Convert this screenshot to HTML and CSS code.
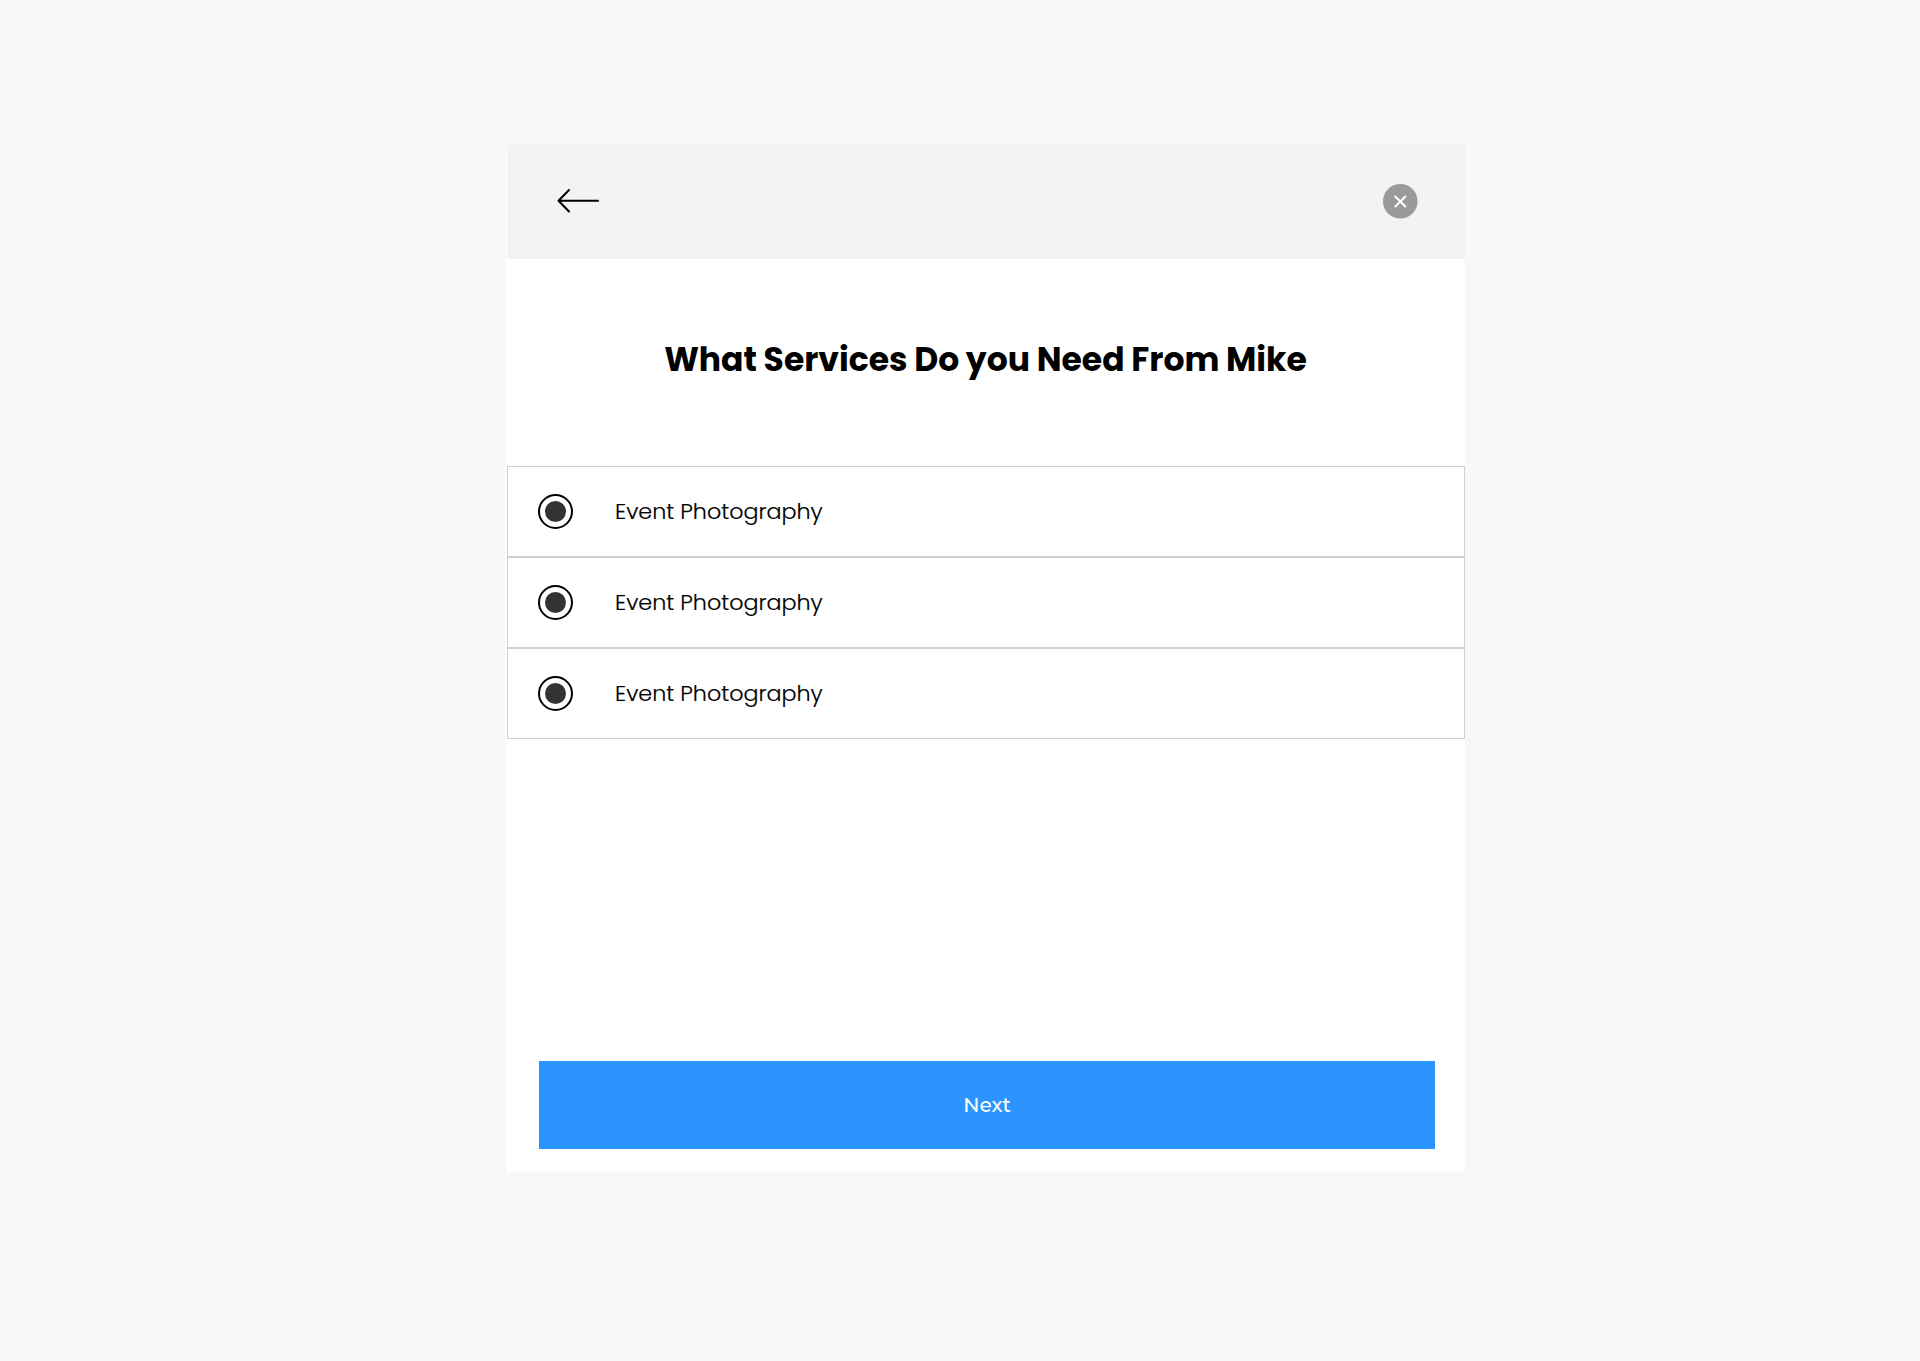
FILE: index.html
```html
<!DOCTYPE html>
<html lang="en">
<head>
<meta charset="utf-8">
<title>Select services</title>
<link rel="stylesheet" href="styles.css">
</head>
<body>
<main class="dialog">
  <header class="bar">
    <button class="icon-button" aria-label="Back">
      <svg width="44" height="28" viewBox="0 0 44 28" fill="none" stroke="#000" stroke-width="2" stroke-linecap="round" stroke-linejoin="round"><path d="M42 12.7H3M13 2 2.5 12.7 13 23.5"/></svg>
    </button>
    <button class="icon-button" aria-label="Close">
      <svg width="35" height="35" viewBox="0 0 35 35"><circle cx="17.3" cy="17.3" r="17.3" fill="#9a9a9a"/><path d="m12.3 12.5 10 10m0-10-10 10" fill="none" stroke="#fff" stroke-width="2" stroke-linecap="round"/></svg>
    </button>
  </header>
  <section class="content">
    <h1 class="title">What Services Do you Need From Mike</h1>
    <ul class="options">
      <li class="option"><span class="radio"></span><span class="label">Event Photography</span></li>
      <li class="option"><span class="radio"></span><span class="label">Event Photography</span></li>
      <li class="option"><span class="radio"></span><span class="label">Event Photography</span></li>
    </ul>
    <button class="next">Next</button>
  </section>
</main>
</body>
</html>
```
FILE: styles.css
```css
* { box-sizing: border-box; }
body {
  margin: 0;
  min-height: 1361px;
  padding: 143px 455px 0 506px;
  background: #f8f8f8;
  color: #000;
  font-family: Poppins, Inter, sans-serif;
}
button { border: 0; padding: 0; font: inherit; }
.dialog {
  height: 1029px;
  display: flex;
  flex-direction: column;
  background: linear-gradient(#f8f8f8 6px, #fff 6px);
}
.bar {
  height: 116px;
  margin-left: 1px;
  padding: 1px 47px 0 49px;
  display: flex;
  align-items: center;
  justify-content: space-between;
  background: #f3f3f3;
}
.icon-button { display: flex; background: none; }
.content {
  flex: 1;
  display: flex;
  flex-direction: column;
  padding-left: 1px;
}
.title {
  margin: 0;
  height: 207px;
  padding: 77px 1px 0 0;
  line-height: 48px;
  font-size: 33px;
  font-weight: 700;
  word-spacing: -0.3px;
  text-align: center;
  white-space: nowrap;
}
.options { list-style: none; margin: 0; padding: 0; }
.option {
  height: 91px;
  display: flex;
  align-items: center;
  gap: 42px;
  padding-left: 30px;
  border: 1px solid #cfcfcf;
}
.radio {
  width: 35px;
  height: 35px;
  border: 2px solid #000;
  border-radius: 50%;
  display: grid;
  place-items: center;
}
.radio::before {
  content: "";
  width: 21px;
  height: 21px;
  border-radius: 50%;
  background: #333;
}
.label {
  font-size: 22.25px;
  font-weight: 300;
  line-height: 32px;
  -webkit-text-stroke: 0.2px #000;
}
.next {
  height: 88px;
  margin: auto 30px 23px 32px;
  background: #2c94ff;
  color: #fff;
  font-family: Montserrat, Poppins, sans-serif;
  font-size: 20px;
  font-weight: 500;
}
```
